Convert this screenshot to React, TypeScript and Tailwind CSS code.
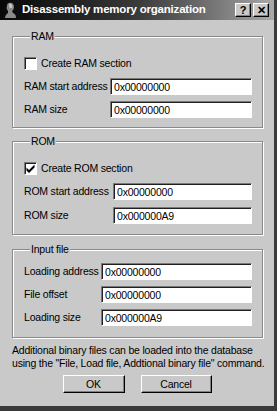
import { useState } from 'react'

const FONT = "font-['Liberation_Sans',Arial,sans-serif]"

function TitleBar() {
  return (
    <div className="h-[20px] flex items-center bg-gradient-to-r from-[#080808] via-[#3a3a3a] to-[#a9a9a9] pl-[3px] pr-[5px]">
      <svg width="15" height="16" viewBox="0 0 15 16" className="shrink-0">
        <path d="M6 1 C9 0 11 2 11 5 C11 7 10 8 9 9 L10 11 C12 12 13 13 13 16 L2 16 C2 13 4 12 5 11 L5 9 C4 8 3 6 4 4 C4 2 5 1 6 1 Z" fill="#8a8a8a" />
        <path d="M6 2 C8 1 10 3 9 6 L7 6 C6 5 6 3 6 2 Z" fill="#c8c8c8" />
      </svg>
      <span className="ml-[4px] text-white font-bold text-[11.5px] leading-none">Disassembly memory organization</span>
      <div className="ml-auto flex gap-[2px]">
        <TitleButton>?</TitleButton>
        <TitleButton>✕</TitleButton>
      </div>
    </div>
  )
}

function TitleButton({ children }: { children: React.ReactNode }) {
  return (
    <div className="w-[16px] h-[14px] bg-[#c9c9c9] border border-t-white border-l-white border-r-black border-b-black shadow-[inset_-1px_-1px_0_#808080] flex items-center justify-center text-[11px] font-bold leading-none text-black">
      {children}
    </div>
  )
}

function Check({ checked, onChange, label }: { checked: boolean; onChange: () => void; label: string }) {
  return (
    <div className="flex items-center h-[13px] cursor-default" onClick={onChange}>
      <div className="w-[13px] h-[13px] bg-white border border-t-[#7a7a7a] border-l-[#7a7a7a] border-r-white border-b-white shadow-[inset_1px_1px_0_#202020] flex items-center justify-center">
        {checked && (
          <svg width="9" height="9" viewBox="0 0 9 9">
            <path d="M0.5 3.5 L3 6 L8.5 0.5 L8.5 3.5 L3 9 L0.5 6.5 Z" fill="black" />
          </svg>
        )}
      </div>
      <span className="ml-[4px]">{label}</span>
    </div>
  )
}

function Field({ label, value, labelW }: { label: string; value: string; labelW: string }) {
  return (
    <div className="flex items-center h-[17px]">
      <span className={`${labelW} shrink-0 whitespace-nowrap`}>{label}</span>
      <input
        readOnly
        value={value}
        className="w-0 flex-1 h-[17px] bg-white px-[3px] text-[10.5px] tracking-[-0.2px] outline-none border border-t-[#7a7a7a] border-l-[#7a7a7a] border-r-white border-b-white shadow-[inset_1px_1px_0_#202020]"
      />
    </div>
  )
}

function Group({ title, children, className }: { title: string; children: React.ReactNode; className?: string }) {
  return (
    <fieldset className={`border border-[#8a8a8a] shadow-[1px_1px_0_#fff,inset_1px_1px_0_#fff] pl-[11px] pr-[10px] ${className ?? ''}`}>
      <legend className="h-[13px] leading-[13px] ml-[6px] px-[1px] bg-[#c9c9c9]">{title}</legend>
      {children}
    </fieldset>
  )
}

export default function App() {
  const [ram, setRam] = useState(false)
  const [rom, setRom] = useState(true)

  return (
    <div className={`w-[277px] h-[411px] bg-[#c9c9c9] border-r-[3px] border-b-[5px] border-[#3a3a3a] flex flex-col overflow-hidden text-[10.5px] tracking-[-0.2px] text-black ${FONT}`}>
      <TitleBar />
      <div className="flex flex-col pl-[12px] pr-[11px] pt-[10px]">
        <Group title="RAM" className="pb-[9px]">
          <div className="mt-[14px]">
            <Check checked={ram} onChange={() => setRam(!ram)} label="Create RAM section" />
          </div>
          <div className="mt-[8px] flex flex-col gap-[6px]">
            <Field label="RAM start address" value="0x00000000" labelW="w-[86px]" />
            <Field label="RAM size" value="0x00000000" labelW="w-[86px]" />
          </div>
        </Group>

        <Group title="ROM" className="mt-[7px] pb-[10px]">
          <div className="mt-[14px]">
            <Check checked={rom} onChange={() => setRom(!rom)} label="Create ROM section" />
          </div>
          <div className="mt-[8px] flex flex-col gap-[7px]">
            <Field label="ROM start address" value="0x00000000" labelW="w-[89px]" />
            <Field label="ROM size" value="0x000000A9" labelW="w-[89px]" />
          </div>
        </Group>

        <Group title="Input file" className="mt-[8px] pb-[11px]">
          <div className="mt-[7px] flex flex-col gap-[6px]">
            <Field label="Loading address" value="0x00000000" labelW="w-[77px]" />
            <Field label="File offset" value="0x00000000" labelW="w-[77px]" />
            <Field label="Loading size" value="0x000000A9" labelW="w-[77px]" />
          </div>
        </Group>

        <p className="mt-[6px] leading-[13px] whitespace-nowrap">
          Additional binary files can be loaded into the database
          <br />
          using the "File, Load file, Addtional binary file" command.
        </p>

        <div className="mt-[5px] flex justify-center gap-[16px] pr-[1px]">
          <button className="w-[62px] h-[18px] bg-[#c9c9c9] border border-t-white border-l-white border-r-black border-b-black shadow-[inset_-1px_-1px_0_#808080] leading-none">
            OK
          </button>
          <button className="w-[71px] h-[18px] bg-[#c9c9c9] border border-t-white border-l-white border-r-black border-b-black shadow-[inset_-1px_-1px_0_#808080] leading-none">
            Cancel
          </button>
        </div>
      </div>
    </div>
  )
}
